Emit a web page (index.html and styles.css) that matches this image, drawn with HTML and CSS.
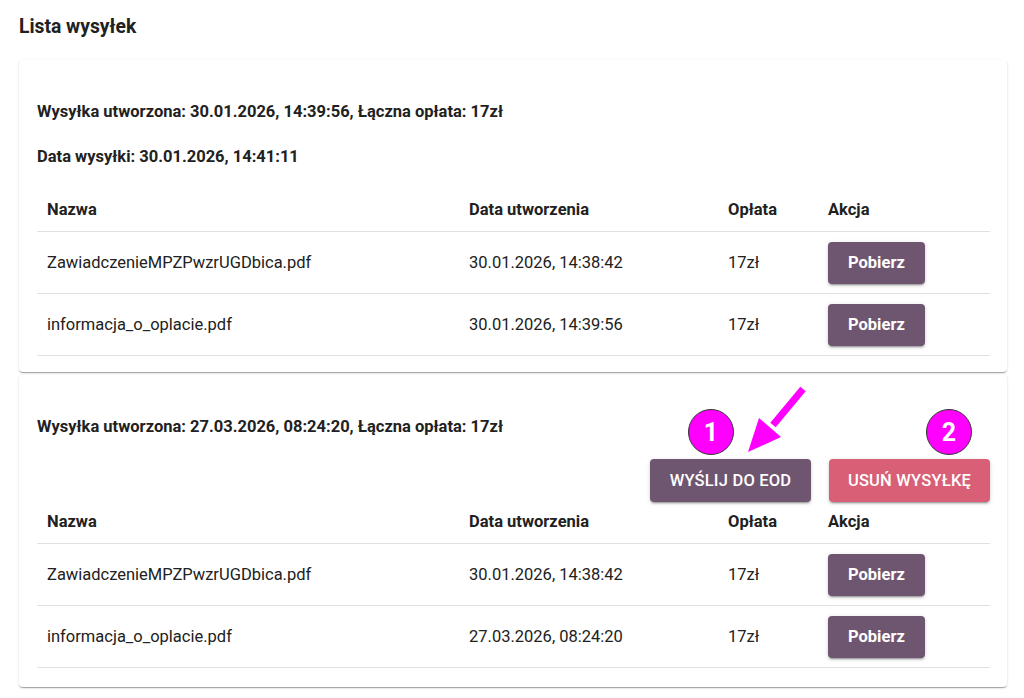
FILE: index.html
```html
<!DOCTYPE html>
<html lang="pl">
<head>
    <meta charset="UTF-8">
    <meta name="viewport" content="width=device-width, initial-scale=1.0">
    <title>Lista wysyłek</title>
    <link rel="stylesheet" href="styles.css">
</head>
<body>
    <div class="page">
        <h2 class="page-title">Lista wysyłek</h2>

        <div class="shipment-card">
            <p class="shipment-info">Wysyłka utworzona: 30.01.2026, 14:39:56, Łączna opłata: 17zł</p>
            <p class="shipment-info second">Data wysyłki: 30.01.2026, 14:41:11</p>

            <table class="files-table">
                <colgroup>
                    <col class="col-name">
                    <col class="col-date">
                    <col class="col-fee">
                    <col class="col-action">
                </colgroup>
                <thead>
                    <tr>
                        <th>Nazwa</th>
                        <th>Data utworzenia</th>
                        <th>Opłata</th>
                        <th>Akcja</th>
                    </tr>
                </thead>
                <tbody>
                    <tr>
                        <td>ZawiadczenieMPZPwzrUGDbica.pdf</td>
                        <td>30.01.2026, 14:38:42</td>
                        <td>17zł</td>
                        <td><button class="btn btn-primary">Pobierz</button></td>
                    </tr>
                    <tr>
                        <td>informacja_o_oplacie.pdf</td>
                        <td>30.01.2026, 14:39:56</td>
                        <td>17zł</td>
                        <td><button class="btn btn-primary">Pobierz</button></td>
                    </tr>
                </tbody>
            </table>
        </div>

        <div class="shipment-card">
            <p class="shipment-info">Wysyłka utworzona: 27.03.2026, 08:24:20, Łączna opłata: 17zł</p>

            <div class="shipment-actions">
                <button class="btn btn-primary btn-upper">Wyślij do EOD</button>
                <button class="btn btn-danger btn-upper">Usuń wysyłkę</button>
            </div>

            <table class="files-table">
                <colgroup>
                    <col class="col-name">
                    <col class="col-date">
                    <col class="col-fee">
                    <col class="col-action">
                </colgroup>
                <thead>
                    <tr>
                        <th>Nazwa</th>
                        <th>Data utworzenia</th>
                        <th>Opłata</th>
                        <th>Akcja</th>
                    </tr>
                </thead>
                <tbody>
                    <tr>
                        <td>ZawiadczenieMPZPwzrUGDbica.pdf</td>
                        <td>30.01.2026, 14:38:42</td>
                        <td>17zł</td>
                        <td><button class="btn btn-primary">Pobierz</button></td>
                    </tr>
                    <tr>
                        <td>informacja_o_oplacie.pdf</td>
                        <td>27.03.2026, 08:24:20</td>
                        <td>17zł</td>
                        <td><button class="btn btn-primary">Pobierz</button></td>
                    </tr>
                </tbody>
            </table>
        </div>

        <!-- annotation overlay -->
        <span class="marker marker-1">1</span>
        <span class="marker marker-2">2</span>
        <svg class="arrow" width="70" height="75" viewBox="0 0 70 75">
            <line x1="62" y1="4" x2="32" y2="40" stroke="#ff00ff" stroke-width="7"/>
            <polygon points="18,33 40,52 7,67" fill="#ff00ff"/>
        </svg>
    </div>
</body>
</html>
```

FILE: styles.css
```css
body {
    margin: 0;
    font-family: Roboto, "Liberation Sans", Arial, sans-serif;
    color: #212121;
    background-color: #fff;
}

.page {
    position: relative;
    padding: 16px 17px 0 19px;
}

.page-title {
    margin: 0 0 22px 0;
    font-size: 19.3px;
    line-height: 22px;
    font-weight: 700;
}

.shipment-card {
    background-color: #fff;
    border-radius: 4px;
    box-shadow: 0 2px 1px -1px rgba(0, 0, 0, 0.2), 0 1px 1px 0 rgba(0, 0, 0, 0.14), 0 1px 3px 0 rgba(0, 0, 0, 0.12);
    padding: 42px 17px 16px 18px;
    margin-bottom: 3px;
}

.shipment-card + .shipment-card {
    padding-bottom: 19px;
}

.shipment-info {
    margin: 0;
    font-size: 16.5px;
    line-height: 20px;
    font-weight: 700;
}

.shipment-info.second {
    margin-top: 25px;
    margin-bottom: 21px;
}

.shipment-actions {
    display: flex;
    justify-content: flex-end;
    gap: 18px;
    margin-top: 22px;
    margin-bottom: -2px;
}

.files-table {
    width: 100%;
    border-collapse: collapse;
    table-layout: fixed;
}

.col-name { width: 422px; }
.col-date { width: 259px; }
.col-fee { width: 100px; }

.files-table th {
    text-align: left;
    font-size: 16.5px;
    font-weight: 700;
    height: 43px;
    padding: 0 10px;
    border-bottom: 1px solid #e0e0e0;
}

.files-table td {
    font-size: 16.5px;
    height: 61px;
    padding: 0 10px;
    border-bottom: 1px solid #e0e0e0;
}

.btn {
    font-family: Roboto, "Liberation Sans", Arial, sans-serif;
    border: none;
    border-radius: 4px;
    color: #fff;
    cursor: pointer;
    height: 42px;
    padding: 0 20px;
    font-size: 16.5px;
    font-weight: 700;
    box-shadow: 0 3px 1px -2px rgba(0, 0, 0, 0.2), 0 2px 2px 0 rgba(0, 0, 0, 0.14), 0 1px 5px 0 rgba(0, 0, 0, 0.12);
}

.btn-primary {
    background-color: #6f5670;
}

.btn-danger {
    background-color: #d95f76;
}

.btn-upper {
    text-transform: uppercase;
    font-size: 16.5px;
    font-weight: 500;
    letter-spacing: 0.2px;
    height: 43px;
    width: 161px;
    padding: 0;
}

.marker {
    position: absolute;
    width: 44px;
    height: 44px;
    border-radius: 50%;
    background-color: #ff00ff;
    border: 1px solid #333;
    color: #fff;
    font-size: 25px;
    font-weight: 700;
    display: flex;
    align-items: center;
    justify-content: center;
    top: 409px;
}

.marker-1 { left: 688px; }
.marker-2 { left: 926px; }

.arrow {
    position: absolute;
    left: 741px;
    top: 385px;
}
```
